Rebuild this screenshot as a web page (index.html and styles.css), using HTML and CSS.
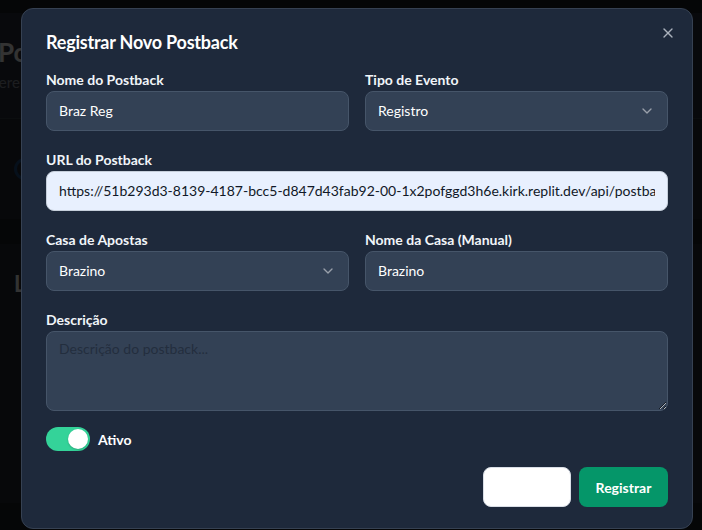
FILE: index.html
```html
<!DOCTYPE html>
<html lang="pt-BR">
<head>
<meta charset="utf-8">
<title>Registrar Novo Postback</title>
<link rel="stylesheet" href="styles.css">
</head>
<body>
<div class="page">
  <header class="page-head">
    <div class="clip">
      <h1 class="page-title">Pos</h1>
      <p class="page-sub">Gere</p>
    </div>
  </header>
  <section class="stats">
    <span class="stat-icon"></span>
  </section>
  <section class="list">
    <div class="clip"><h2 class="list-title">L</h2></div>
  </section>
</div>
<div class="overlay"></div>
<div class="dialog" role="dialog">
  <h2 class="dialog-title">Registrar Novo Postback</h2>
  <button class="close" aria-label="Fechar">
    <svg width="16" height="16" viewBox="0 0 24 24" fill="none" stroke="currentColor" stroke-width="2" stroke-linecap="round" stroke-linejoin="round"><path d="M18 6 6 18"/><path d="m6 6 12 12"/></svg>
  </button>
  <form class="form">
    <div class="row2">
      <div class="field">
        <label class="label">Nome do Postback</label>
        <input class="control" value="Braz Reg">
      </div>
      <div class="field">
        <label class="label">Tipo de Evento</label>
        <div class="control select"><span>Registro</span>
          <svg class="chev" width="16" height="16" viewBox="0 0 24 24" fill="none" stroke="currentColor" stroke-width="2" stroke-linecap="round" stroke-linejoin="round"><path d="m6 9 6 6 6-6"/></svg>
        </div>
      </div>
    </div>
    <div class="field">
      <label class="label">URL do Postback</label>
      <input class="control url" value="https://51b293d3-8139-4187-bcc5-d847d43fab92-00-1x2pofggd3h6e.kirk.replit.dev/api/postback/registro">
    </div>
    <div class="row2">
      <div class="field">
        <label class="label">Casa de Apostas</label>
        <div class="control select"><span>Brazino</span>
          <svg class="chev" width="16" height="16" viewBox="0 0 24 24" fill="none" stroke="currentColor" stroke-width="2" stroke-linecap="round" stroke-linejoin="round"><path d="m6 9 6 6 6-6"/></svg>
        </div>
      </div>
      <div class="field">
        <label class="label">Nome da Casa (Manual)</label>
        <input class="control" value="Brazino">
      </div>
    </div>
    <div class="field">
      <label class="label">Descrição</label>
      <textarea class="control area" placeholder="Descrição do postback..."></textarea>
    </div>
    <div class="switch-row">
      <span class="switch"><span class="thumb"></span></span>
      <span class="switch-label">Ativo</span>
    </div>
    <div class="footer">
      <button type="button" class="btn btn-cancel">Cancelar</button>
      <button type="button" class="btn btn-primary">Registrar</button>
    </div>
  </form>
</div>
</body>
</html>
```
FILE: styles.css
```css
* { box-sizing: border-box; }
html, body { margin: 0; height: 100%; }
body {
  background: #1a1e27;
  font-family: "Lato", "Noto Sans", sans-serif;
  overflow: hidden;
}
.page { padding-top: 13px; }
.clip { width: 21px; overflow: hidden; }
.page-head {
  height: 105px;
  background: #2c313c;
  padding-top: 24px;
}
.page-title { margin: 0 0 0 -2px; font-size: 26px; font-weight: 700; color: #fff; line-height: 30px; white-space: nowrap; }
.page-sub { margin: 6px 0 0 -12px; font-size: 15px; color: #8c93a0; white-space: nowrap; }
.stats {
  height: 101px;
  background: #262b35;
  border-top: 1px solid #3a404c;
  display: flex; align-items: center; padding-left: 14px;
}
.stat-icon { width: 22px; height: 22px; border-radius: 50%; border: 3px solid #1f4f87; }
.list {
  margin-top: 25px;
  height: 259px;
  background: #262b35;
  padding-top: 26px;
}
.list-title { margin: 0 0 0 14px; font-size: 22px; font-weight: 700; color: #fff; }
.overlay { position: fixed; inset: 0; background: rgba(0,0,0,0.8); }

.dialog {
  position: fixed;
  left: 21px; top: 8px;
  width: 672px; height: 521px;
  background: #1e293b;
  border: 1px solid #364152;
  border-radius: 12px;
  padding: 24px 24px 20px;
  color: #f8fafc;
}
.dialog-title {
  margin: 0;
  font-size: 18px; line-height: 18px; font-weight: 700;
  letter-spacing: -0.012em;
  color: #fff;
}
.close {
  position: absolute; right: 16px; top: 16px;
  width: 16px; height: 16px; padding: 0; border: 0; background: none;
  color: #c3c9d3; opacity: 0.85;
}
.close svg { display: block; }
.form { margin-top: 19px; display: flex; flex-direction: column; gap: 19px; }
.row2 { display: grid; grid-template-columns: 1fr 1fr; gap: 16px; }
.field { display: flex; flex-direction: column; }
.label {
  display: block;
  font-size: 14px; line-height: 20px; font-weight: 700;
  color: #f1f5f9;
  margin-bottom: 1px;
}
.control {
  height: 40px; width: 100%;
  border: 1px solid #465569;
  background: #334155;
  border-radius: 8px;
  padding: 0 12px 1px;
  font: inherit; font-size: 14px;
  color: #fff;
  outline: none;
}
.select { display: flex; align-items: center; justify-content: space-between; }
.chev { color: #fff; opacity: 0.5; }
.url { background: #e8f0fe; color: #111827; border-color: #c5ceda; }
.area {
  height: 80px; padding: 8px 12px; resize: vertical; display: block;
}
.area::placeholder { color: #232e3e; }
.switch-row { display: flex; align-items: center; gap: 8px; margin-top: -3px; }
.switch {
  width: 44px; height: 24px; border-radius: 12px;
  background: #34d399; border: 2px solid transparent;
  display: flex; align-items: center;
}
.thumb { width: 20px; height: 20px; border-radius: 50%; background: #fff; margin-left: 20px; box-shadow: 0 1px 2px rgba(0,0,0,0.2); }
.switch-label { font-size: 14px; font-weight: 700; color: #fff; }
.footer { display: flex; justify-content: flex-end; gap: 8px; margin-top: -3px; }
.btn {
  height: 40px; padding: 0 16px; border-radius: 8px;
  font: inherit; font-size: 14px; font-weight: 700;
}
.btn-cancel { background: #fff; color: #fff; border: 1px solid #d9dee6; width: 88px; }
.btn-primary { background: #059669; color: #fff; border: 0; width: 89px; }
```
